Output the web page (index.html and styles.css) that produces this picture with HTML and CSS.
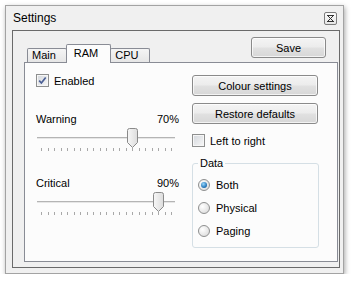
FILE: index.html
```html
<!DOCTYPE html>
<html>
<head>
<meta charset="utf-8">
<title>Settings</title>
<link rel="stylesheet" href="styles.css">
</head>
<body>
<div class="window">
  <div class="titlebar">
    <span class="title">Settings</span>
    <span class="close"><svg width="9" height="9" viewBox="0 0 9 9"><path d="M1 1.5h7M1 7.5h7M2 2l5 5M7 2l-5 5" stroke="#333" stroke-width="1" fill="none"/></svg></span>
  </div>
  <div class="frame">
    <div class="top">
      <div class="tabs">
        <div class="tab">Main</div>
        <div class="tab active">RAM</div>
        <div class="tab">CPU</div>
      </div>
      <div class="btn save">Save</div>
    </div>
    <div class="panel">
      <div class="left">
        <div class="check">
          <span class="box"><svg width="11" height="11" viewBox="0 0 11 11"><path d="M2.2 5.6l2.2 2.4 4.3-5.6" stroke="#4b5f95" stroke-width="1.7" fill="none"/></svg></span>
          <span>Enabled</span>
        </div>
        <div class="row first"><span>Warning</span><span>70%</span></div>
        <div class="slider" style="--v:.7">
          <div class="track"></div>
          <div class="ticks"><i></i><i></i><i></i><i></i><i></i><i></i><i></i><i></i><i></i><i></i><i></i><i></i><i></i><i></i><i></i><i></i><i></i><i></i><i></i><i></i><i></i></div>
          <svg class="thumb" width="11" height="20" viewBox="0 0 11 20"><defs><linearGradient id="tg" x1="0" y1="0" x2="1" y2="0"><stop offset="0" stop-color="#f7f7f7"/><stop offset="1" stop-color="#dcdcdc"/></linearGradient></defs><path d="M0.5 2.5Q0.5 0.5 2.5 0.5H8.5Q10.5 0.5 10.5 2.5V14.5L5.5 19.5L0.5 14.5Z" fill="url(#tg)" stroke="#8a8a8a"/></svg>
        </div>
        <div class="row"><span>Critical</span><span>90%</span></div>
        <div class="slider" style="--v:.9">
          <div class="track"></div>
          <div class="ticks"><i></i><i></i><i></i><i></i><i></i><i></i><i></i><i></i><i></i><i></i><i></i><i></i><i></i><i></i><i></i><i></i><i></i><i></i><i></i><i></i><i></i></div>
          <svg class="thumb" width="11" height="20" viewBox="0 0 11 20"><path d="M0.5 2.5Q0.5 0.5 2.5 0.5H8.5Q10.5 0.5 10.5 2.5V14.5L5.5 19.5L0.5 14.5Z" fill="url(#tg)" stroke="#8a8a8a"/></svg>
        </div>
      </div>
      <div class="right">
        <div class="btn wide first">Colour settings</div>
        <div class="btn wide">Restore defaults</div>
        <div class="check ltr">
          <span class="box"></span>
          <span>Left to right</span>
        </div>
        <fieldset class="group">
          <legend>Data</legend>
          <div class="radio"><span class="dot on"></span><span>Both</span></div>
          <div class="radio"><span class="dot"></span><span>Physical</span></div>
          <div class="radio"><span class="dot"></span><span>Paging</span></div>
        </fieldset>
      </div>
    </div>
  </div>
</div>
</body>
</html>
```

FILE: styles.css
```css
html, body {
  margin: 0;
  padding: 0;
  background: #ffffff;
}

body {
  font-family: "Liberation Sans", Arial, sans-serif;
  font-size: 11px;
  color: #000;
}

.window {
  margin: 5px 0 0 5px;
  width: 339px;
  height: 269px;
  box-sizing: border-box;
  border: 1px solid #a3a3a3;
  background: #f0f0f0;
  box-shadow: 1px 2px 5px rgba(0, 0, 0, 0.35);
  display: flex;
  flex-direction: column;
}

.titlebar {
  height: 24px;
  display: flex;
  align-items: center;
  justify-content: space-between;
  padding: 0 6px 0 7px;
}

.title {
  font-size: 12px;
}

.close {
  width: 13px;
  height: 13px;
  box-sizing: border-box;
  border: 1px solid #7d7d7d;
  border-radius: 2px;
  background: linear-gradient(#fbfbfb, #e6e6e6);
  display: flex;
  align-items: center;
  justify-content: center;
  align-self: flex-start;
  margin-top: 6px;
}

.frame {
  flex: 1;
  margin: 0 3px 5px 6px;
  border: 1px solid #6a6a6a;
  display: flex;
  flex-direction: column;
}

.top {
  height: 31px;
  flex: none;
  display: flex;
  align-items: flex-end;
  justify-content: space-between;
  position: relative;
  z-index: 1;
}

.tabs {
  display: flex;
  align-items: flex-end;
  margin: 0 0 -1px 14px;
}

.tab {
  box-sizing: border-box;
  height: 14px;
  margin: 0 0 1px -1px;
  padding: 0 10px 0 4px;
  border: 1px solid #898c95;
  border-bottom: 0;
  border-radius: 2px 2px 0 0;
  line-height: 13px;
  background: linear-gradient(#f5f5f5, #e6e6e6);
}

.tab:first-child {
  margin-left: 0;
}

.tab.active {
  height: 19px;
  margin-bottom: 0;
  padding: 0 12px 0 7px;
  line-height: 17px;
  background: #fcfcfc;
  position: relative;
  z-index: 1;
}

.btn {
  box-sizing: border-box;
  height: 21px;
  border: 1px solid #8a8a8a;
  border-radius: 3px;
  background: linear-gradient(#f4f4f4 0%, #ececec 48%, #e1e1e1 52%, #d7d7d7 100%);
  box-shadow: inset 0 0 0 1px rgba(255, 255, 255, 0.7);
  display: flex;
  align-items: center;
  justify-content: center;
}

.save {
  width: 75px;
  align-self: flex-start;
  margin: 6px 13px 0 0;
}

.panel {
  flex: 1;
  margin: 0 1px 5px 11px;
  border: 1px solid #898c95;
  background: #fcfcfc;
  display: flex;
  align-items: flex-start;
  padding: 11px 0 0 11px;
}

.left {
  width: 143px;
  display: flex;
  flex-direction: column;
}

.check {
  display: flex;
  align-items: center;
  height: 13px;
}

.box {
  width: 13px;
  height: 13px;
  box-sizing: border-box;
  border: 1px solid #8e8f8f;
  background: linear-gradient(135deg, #d3d7dc, #f8f8f8);
  box-shadow: inset 0 0 0 1px #f6f6f6;
  margin-right: 5px;
  display: flex;
  align-items: center;
  justify-content: center;
  flex: none;
}

.row {
  display: flex;
  justify-content: space-between;
  height: 13px;
  line-height: 13px;
  margin-top: 25px;
}

.row.first {
  margin-top: 26px;
}

.slider {
  position: relative;
  height: 26px;
}

.track {
  margin: 11px 4px 0 1px;
  height: 1px;
  background: #b4b4b4;
  border-bottom: 1px solid #e6e6e6;
}

.ticks {
  margin-top: 9px;
  width: 131px;
  padding-left: 5px;
  height: 3px;
  display: flex;
  justify-content: space-between;
}

.ticks i {
  width: 1px;
  height: 3px;
  background: #a8a8a8;
}

.thumb {
  position: absolute;
  top: 2px;
  left: calc(var(--v) * 130px - 0.5px);
}

.right {
  width: 127px;
  margin-left: 13px;
  display: flex;
  flex-direction: column;
}

.wide {
  width: 126px;
  margin-top: 7px;
}

.wide.first {
  margin-top: 1px;
}

.ltr {
  margin-top: 10px;
}

.group {
  margin: 10px 0 0 0;
  padding: 3px 0 5px 5px;
  border: 1px solid #d5dfe5;
  border-radius: 3px;
  min-width: 0;
}

.group legend {
  padding: 0 2px;
  line-height: 13px;
}

.radio {
  display: flex;
  align-items: center;
  height: 23px;
}

.dot {
  width: 12px;
  height: 12px;
  box-sizing: border-box;
  border-radius: 50%;
  border: 1px solid #8e8f8f;
  background: radial-gradient(circle at 35% 35%, #ffffff, #d6d6d6);
  margin-right: 6px;
  position: relative;
  flex: none;
}

.dot.on::after {
  content: "";
  position: absolute;
  left: 2px;
  top: 2px;
  width: 6px;
  height: 6px;
  border-radius: 50%;
  background: radial-gradient(circle at 40% 35%, #9ad8fb, #2a7bbd 60%, #124f84);
}
```
